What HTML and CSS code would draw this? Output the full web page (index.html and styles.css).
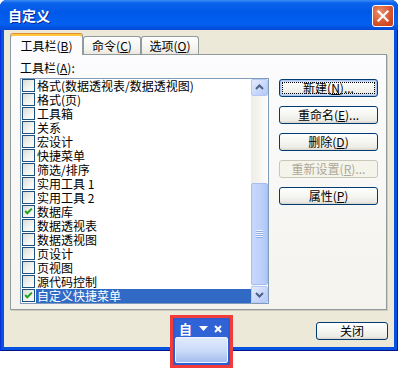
FILE: index.html
```html
<!DOCTYPE html>
<html>
<head>
<meta charset="utf-8">
<link rel="stylesheet" href="styles.css">
</head>
<body>
<div class="window">
  <div class="titlebar">
    <span class="title">自定义</span>
    <span class="close-x"><svg width="20" height="20" viewBox="0 0 20 20"><path d="M5.5 5.5 L14.5 14.5 M14.5 5.5 L5.5 14.5" stroke="#fff" stroke-width="2.2" stroke-linecap="square"/></svg></span>
  </div>
  <div class="client">
    <div class="tabs">
      <div class="tab active">工具栏(<u>B</u>)</div>
      <div class="tab">命令(<u>C</u>)</div>
      <div class="tab">选项(<u>O</u>)</div>
    </div>
    <div class="panel">
      <div class="leftcol">
        <div class="label">工具栏(<u>A</u>):</div>
        <div class="listbox">
          <div class="items">
            <div class="row"><span class="cb"></span><span class="txt">格式(数据透视表/数据透视图)</span></div>
            <div class="row"><span class="cb"></span><span class="txt">格式(页)</span></div>
            <div class="row"><span class="cb"></span><span class="txt">工具箱</span></div>
            <div class="row"><span class="cb"></span><span class="txt">关系</span></div>
            <div class="row"><span class="cb"></span><span class="txt">宏设计</span></div>
            <div class="row"><span class="cb"></span><span class="txt">快捷菜单</span></div>
            <div class="row"><span class="cb"></span><span class="txt">筛选/排序</span></div>
            <div class="row"><span class="cb"></span><span class="txt">实用工具 1</span></div>
            <div class="row"><span class="cb"></span><span class="txt">实用工具 2</span></div>
            <div class="row"><span class="cb checked"><svg width="11" height="11" viewBox="0 0 11 11"><path d="M2.2 5 L4.3 7.3 L8.8 2.6" fill="none" stroke="#21a121" stroke-width="2"/></svg></span><span class="txt">数据库</span></div>
            <div class="row"><span class="cb"></span><span class="txt">数据透视表</span></div>
            <div class="row"><span class="cb"></span><span class="txt">数据透视图</span></div>
            <div class="row"><span class="cb"></span><span class="txt">页设计</span></div>
            <div class="row"><span class="cb"></span><span class="txt">页视图</span></div>
            <div class="row"><span class="cb"></span><span class="txt">源代码控制</span></div>
            <div class="row selected"><span class="cb checked"><svg width="11" height="11" viewBox="0 0 11 11"><path d="M2.2 5 L4.3 7.3 L8.8 2.6" fill="none" stroke="#21a121" stroke-width="2"/></svg></span><span class="txt">自定义快捷菜单</span></div>
          </div>
          <div class="scrollbar">
            <div class="sbtn"><svg width="15" height="15" viewBox="0 0 15 15"><path d="M4 9 L7.5 5.5 L11 9" fill="none" stroke="#4d6185" stroke-width="2"/></svg></div>
            <div class="track">
              <div class="thumb"><span class="grip"></span></div>
            </div>
            <div class="sbtn"><svg width="15" height="15" viewBox="0 0 15 15"><path d="M4 6 L7.5 9.5 L11 6" fill="none" stroke="#4d6185" stroke-width="2"/></svg></div>
          </div>
        </div>
      </div>
      <div class="btncol">
        <div class="btn default"><span class="focus">新建(<u>N</u>)...</span></div>
        <div class="btn">重命名(<u>E</u>)...</div>
        <div class="btn">删除(<u>D</u>)</div>
        <div class="btn disabled">重新设置(<u>R</u>)...</div>
        <div class="btn">属性(<u>P</u>)</div>
      </div>
    </div>
    <div class="footer">
      <div class="btn closebtn">关闭</div>
    </div>
  </div>
</div>
<div class="floater">
  <div class="ftb">
    <div class="ftb-title">
      <span class="ftb-name">自</span>
      <svg width="9" height="5" viewBox="0 0 9 5"><path d="M0 0 H9 L4.5 5 Z" fill="#fff"/></svg>
      <svg width="8" height="8" viewBox="0 0 8 8"><path d="M1 1 L7 7 M7 1 L1 7" stroke="#fff" stroke-width="2"/></svg>
    </div>
    <div class="ftb-body"></div>
  </div>
</div>
</body>
</html>
```

FILE: styles.css
```css
* { box-sizing: border-box; margin: 0; padding: 0; }
html, body { background: #fff; }
body {
  width: 404px;
  height: 374px;
  position: relative;
  overflow: hidden;
  font-family: "Noto Sans CJK SC", "Noto Sans", sans-serif;
  font-size: 12px;
  line-height: 14px;
  color: #000;
}
u { text-decoration: underline; text-underline-offset: 1px; }

.window {
  width: 398px;
  height: 351px;
  display: flex;
  flex-direction: column;
  background: #0553e0;
  border-radius: 7px 7px 0 0;
  box-shadow: inset 1px 0 #0831d9, inset -1px 0 #0019a0, inset 0 -1px #00138c;
}
.titlebar {
  height: 30px;
  flex: none;
  display: flex;
  align-items: center;
  justify-content: space-between;
  padding: 0 4px 0 8px;
  border-radius: 7px 7px 0 0;
  background: linear-gradient(#3d8ef5 0%, #0a62ec 10%, #0058e8 40%, #0460f0 80%, #0349d4 100%);
}
.title {
  color: #fff;
  font-weight: bold;
  font-size: 14px;
  letter-spacing: 0px;
  text-shadow: 1px 1px #0a2a9a;
}
.close-x {
  width: 22px;
  height: 22px;
  margin-top: 1px;
  border: 1px solid #fff;
  border-radius: 3px;
  background: radial-gradient(circle at 35% 30%, #ec8d6d, #d6522c 60%, #c13b17);
  display: flex;
  align-items: center;
  justify-content: center;
}

.client {
  flex: 1;
  margin: 0 4px 4px;
  background: #ece9d8;
  padding: 3px 7px 0 6px;
  display: flex;
  flex-direction: column;
}

.tabs {
  height: 21px;
  display: flex;
  align-items: flex-end;
  position: relative;
  z-index: 1;
}
.tab {
  width: 58px;
  height: 18px;
  display: flex;
  align-items: center;
  justify-content: center;
  border: 1px solid #919b9c;
  border-bottom: none;
  border-radius: 3px 3px 0 0;
  background: linear-gradient(#fefefe, #f4f3ee 70%, #e9e7de);
  padding-top: 1px;
}
.tab.active {
  width: 73px;
  height: 22px;
  margin-bottom: -1px;
  border-top: 1px solid #e68b2c;
  box-shadow: inset 0 2px #ffc83c;
  background: #fcfcfe;
  padding-top: 2px;
}

.panel {
  height: 256px;
  flex: none;
  border: 1px solid #919b9c;
  background: linear-gradient(#fcfcfe, #f4f3ee);
  box-shadow: 1px 1px 0 #d0cdbf;
  display: flex;
  padding: 6px 0 0 9px;
}
.leftcol { width: 249px; display: flex; flex-direction: column; }
.label { height: 14px; margin-bottom: 3px; }
.listbox {
  height: 226px;
  border: 1px solid #7f9db9;
  background: #fff;
  display: flex;
}
.items { flex: 1; display: flex; flex-direction: column; }
.row {
  height: 14px;
  display: flex;
  align-items: flex-start;
  padding-left: 1px;
}
.cb {
  width: 13px;
  height: 13px;
  flex: none;
  border: 1px solid #1c5180;
  background: linear-gradient(135deg, #dcdcd6, #f4f4f1 60%, #fff);
  display: flex;
  align-items: center;
  justify-content: center;
}
.txt {
  flex: 1;
  height: 14px;
  margin-left: 1px;
  padding-left: 1px;
  white-space: nowrap;
}
.row.selected .txt { background: #316ac5; color: #fff; }

.scrollbar {
  width: 17px;
  display: flex;
  flex-direction: column;
  background: linear-gradient(90deg, #eeede5, #f3f1ec 30%, #fdfdfa);
}
.sbtn {
  height: 17px;
  flex: none;
  border: 1px solid #b4c8f6;
  border-radius: 2px;
  background: linear-gradient(135deg, #e3ebfe, #c6d6fb 60%, #b4c8f6);
  display: flex;
  align-items: center;
  justify-content: center;
}
.track {
  flex: 1;
  display: flex;
  flex-direction: column;
  padding-top: 87px;
  padding-bottom: 1px;
}
.thumb {
  flex: 1;
  border: 1px solid #a7bdf0;
  border-radius: 2px;
  background: linear-gradient(90deg, #c9d8fc, #bcd0fa 60%, #b0c6f6);
  display: flex;
  align-items: center;
  justify-content: center;
}
.grip {
  width: 7px;
  height: 8px;
  background: repeating-linear-gradient(#eef4fe 0 1px, #8cacee 1px 2px);
}

.btncol {
  margin-left: 10px;
  margin-top: 18px;
  display: flex;
  flex-direction: column;
  gap: 9px;
}
.btn {
  width: 99px;
  height: 18px;
  border: 1px solid #003c74;
  border-radius: 3px;
  background: linear-gradient(#fff, #f5f5f1 50%, #ecebe6 85%, #d8d4c8);
  display: flex;
  align-items: center;
  justify-content: center;
  white-space: nowrap;
}
.btn.default {
  padding: 2px;
  box-shadow: inset 0 0 0 1px #a9c4ef, inset 0 0 0 2px #cbdaf5;
}
.focus {
  width: 100%;
  height: 100%;
  border: 1px dotted #000;
  display: flex;
  align-items: center;
  justify-content: center;
}
.btn.disabled {
  border-color: #c9c7ba;
  background: #f5f4ea;
  color: #aca899;
}

.footer {
  display: flex;
  justify-content: flex-end;
  padding-top: 12px;
  margin-right: -1px;
}
.closebtn { width: 72px; }

.floater {
  position: absolute;
  left: 170px;
  top: 315px;
  width: 63px;
  height: 53px;
  border: 3px solid #f23b3b;
  background: #fff;
}
.ftb {
  height: 100%;
  display: flex;
  flex-direction: column;
  border: 2px solid #2c5ed2;
  background: #2f63d6;
}
.ftb-title {
  height: 17px;
  flex: none;
  display: flex;
  align-items: center;
  padding-left: 4px;
  gap: 6px;
  color: #fff;
}
.ftb-name { font-weight: bold; font-size: 13px; margin-right: 1px; }
.ftb-body {
  flex: 1;
  border: 1px solid #eef4ff;
  border-radius: 2px;
  background: linear-gradient(#e0eafc, #c9daf9 55%, #a4bdee);
}
```
